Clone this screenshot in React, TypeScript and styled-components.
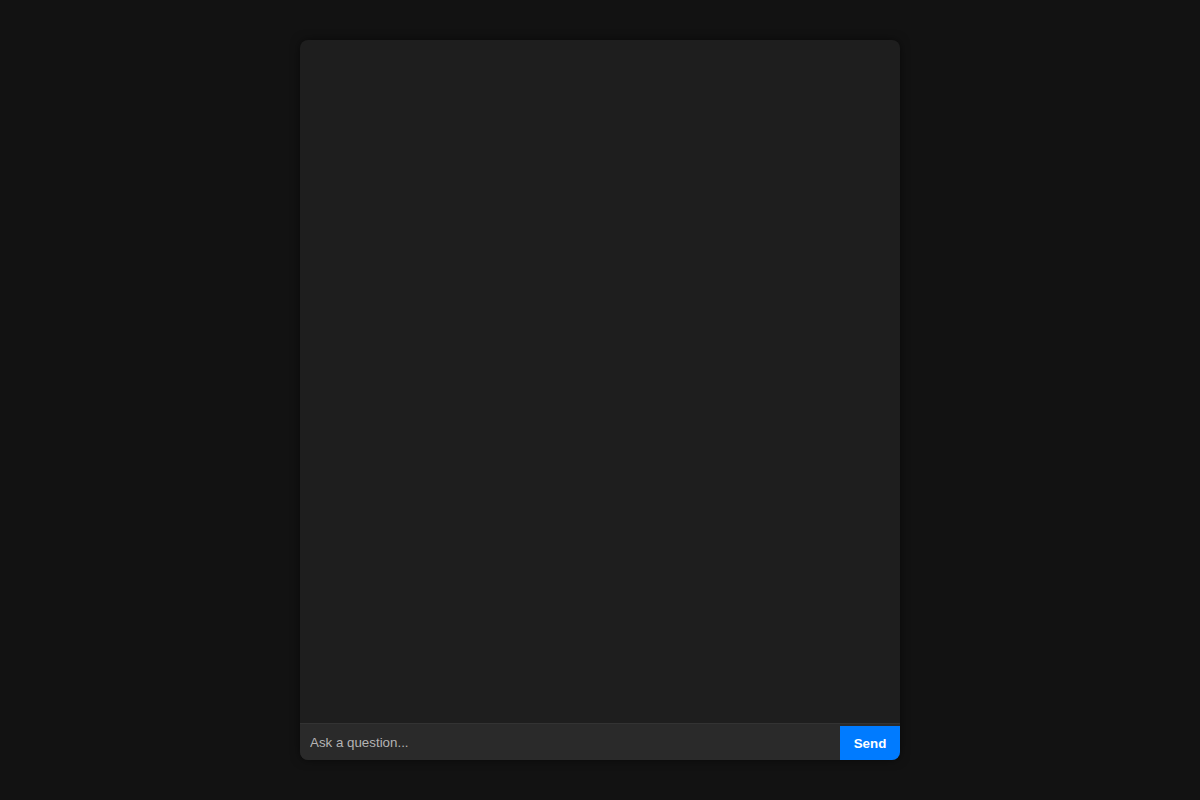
import styled, { createGlobalStyle } from "styled-components"

const GlobalStyle = createGlobalStyle`
  html, body {
    margin: 0;
    padding: 0;
    background-color: #121212;
    font-family: "Liberation Sans", Arial, sans-serif;
  }
`

export default function App() {
  return (
    <>
      <GlobalStyle />
      <Page>
        <ChatBox>
          <Messages />
          <InputRow onSubmit={(e) => e.preventDefault()}>
            <Input type="text" placeholder="Ask a question..." />
            <SendButton type="submit">Send</SendButton>
          </InputRow>
        </ChatBox>
      </Page>
    </>
  )
}

const Page = styled.div`
  display: flex;
  justify-content: center;
  padding: 40px 0;
`

const ChatBox = styled.div`
  width: 600px;
  height: 720px;
  display: flex;
  flex-direction: column;
  background-color: #1e1e1e;
  border-radius: 8px;
  overflow: hidden;
  box-shadow: 0 0 10px rgba(0, 0, 0, 0.5);
`

const Messages = styled.div`
  flex: 1;
  overflow-y: auto;
  padding: 10px;
`

const InputRow = styled.form`
  display: flex;
  border-top: 1px solid #333;
  margin: 0;
`

const Input = styled.input`
  flex: 1;
  padding: 10px;
  border: none;
  outline: none;
  background-color: #2a2a2a;
  color: #fff;
  font-family: "Liberation Sans", Arial, sans-serif;
  font-size: 13.333px;
  height: 36px;
  box-sizing: border-box;

  &::placeholder {
    color: #b4b4b4;
  }
`

const SendButton = styled.button`
  width: 60px;
  padding: 0;
  border: none;
  border-top: 2px solid #2a2a2a;
  background-color: #007bff;
  background-clip: padding-box;
  color: #fff;
  font-family: "Liberation Sans", Arial, sans-serif;
  font-size: 13.333px;
  font-weight: bold;
  cursor: pointer;
`
